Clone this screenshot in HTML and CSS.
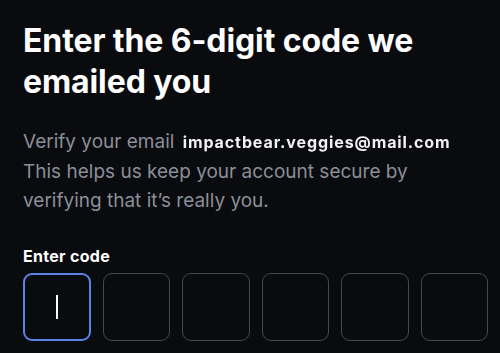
FILE: index.html
```html
<!DOCTYPE html>
<html lang="en">
<head>
<meta charset="utf-8">
<title>Verify code</title>
<link rel="stylesheet" href="styles.css">
</head>
<body>
<main class="page">
  <h1 class="title">Enter the 6-digit code we emailed you</h1>
  <p class="desc">Verify your email <span class="email">impactbear.veggies@mail.com</span> This helps us keep your account secure by verifying that it’s really you.</p>
  <label class="label">Enter code</label>
  <div class="code">
    <div class="box box-active"><span class="caret"></span></div>
    <div class="box"></div>
    <div class="box"></div>
    <div class="box"></div>
    <div class="box"></div>
    <div class="box"></div>
  </div>
</main>
</body>
</html>
```
FILE: styles.css
```css
html, body {
  margin: 0;
  padding: 0;
  background: #0a0b0f;
  height: 100%;
  overflow: hidden;
}
.page {
  padding: 20px 13px 0 23px;
  font-family: Inter, "Noto Sans", sans-serif;
  color: #fff;
}
.title {
  margin: 0;
  font-size: 32px;
  line-height: 41px;
  font-weight: 700;
  letter-spacing: -0.1px;
  width: 440px;
}
.desc {
  margin: 25px 0 0;
  font-size: 19px;
  line-height: 29px;
  color: #8a8f99;
  width: 440px;
}
.email {
  color: #f2f2f2;
  filter: blur(0.7px);
  font-weight: 700;
  font-size: 16px;
  letter-spacing: 0.9px;
  margin-left: 3px;
}
.label {
  display: block;
  margin-top: 31px;
  font-size: 16px;
  line-height: 20px;
  font-weight: 700;
  letter-spacing: 0.3px;
}
.code {
  margin-top: 7px;
  display: grid;
  grid-template-columns: repeat(6, 1fr);
  gap: 12px;
  width: 465px;
}
.box {
  height: 66px;
  border: 1px solid #45484f;
  border-radius: 9px;
  display: flex;
  align-items: center;
  justify-content: center;
}
.box-active {
  border: 2px solid #5b84e6;
  height: 64px;
}
.caret {
  width: 1.5px;
  height: 24px;
  background: #fff;
}
```
